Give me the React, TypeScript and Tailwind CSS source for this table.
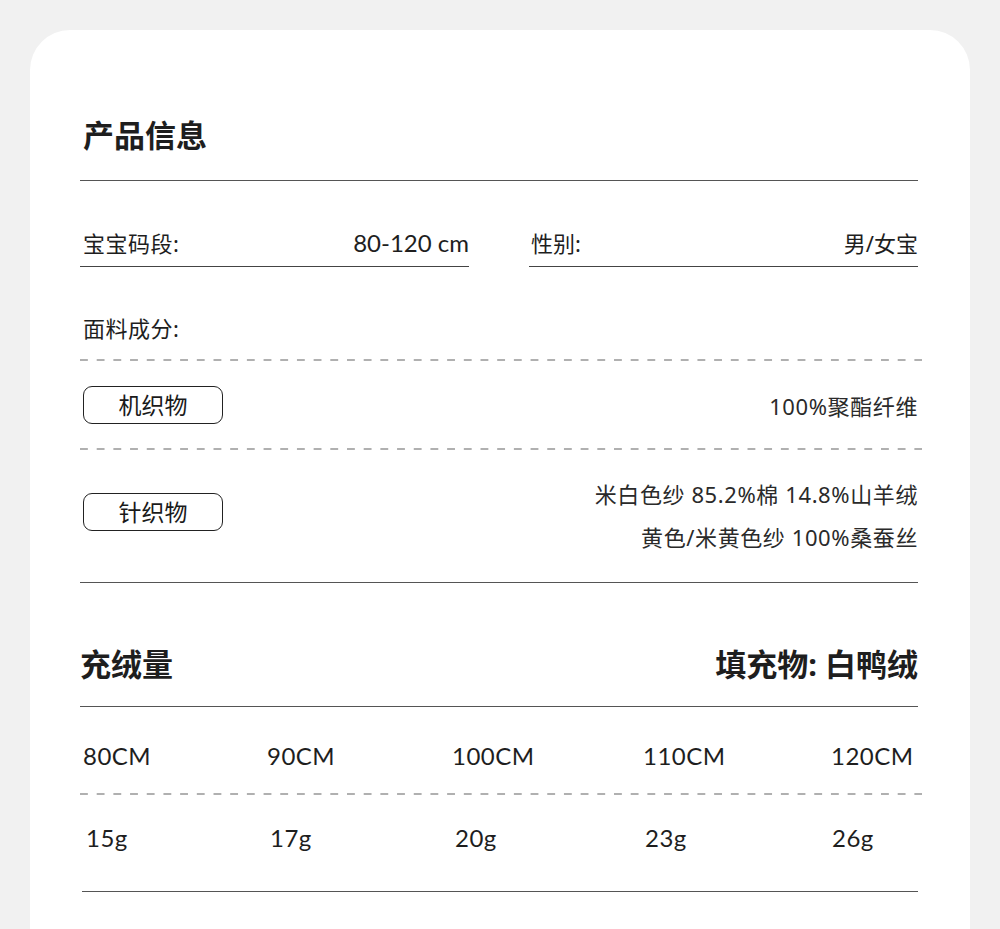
const cjk = "font-['Noto_Sans','Noto_Sans_CJK_SC',sans-serif]";
const geo = "font-['Lato','Noto_Sans_CJK_SC',sans-serif]";

function Dashed() {
  return (
    <div className="h-[2px] w-[842px] bg-[linear-gradient(to_right,#b0b0b0_8px,transparent_8px)] bg-[length:16.7px_2px] bg-repeat-x" />
  );
}

function Tag({ label }: { label: string }) {
  return (
    <div className="ml-[3px] flex h-[38px] w-[140px] items-center justify-center rounded-[9px] border border-[#222] text-[23px] leading-[24px] text-[#1a1a1a]">
      {label}
    </div>
  );
}

const sizes = ["80CM", "90CM", "100CM", "110CM", "120CM"];
const weights = ["15g", "17g", "20g", "23g", "26g"];

export default function App() {
  return (
    <div className={`min-h-[929px] bg-[#f1f1f1] pt-[30px] px-[30px] ${cjk} text-[#1e1e1e]`}>
      <div className="min-h-[899px] rounded-t-[40px] bg-white pl-[50px] pr-[52px]">
        {/* 产品信息 */}
        <div className="pt-[90px] pb-[30px] pl-[3px]">
          <h1 className="text-[31px] leading-[30px] font-bold">产品信息</h1>
        </div>
        <div className="h-px bg-[#555]" />

        <div className="flex justify-between">
          <div className="flex w-[389px] items-center justify-between border-b border-[#444] pt-[50px] pb-[11px] pl-[3px] text-[22px] leading-[24px]">
            <span className="tracking-[0.5px]">宝宝码段:</span>
            <span className={`${geo} text-[24px]`}>80-120 cm</span>
          </div>
          <div className="flex w-[389px] items-center justify-between border-b border-[#444] pt-[50px] pb-[11px] pl-[2px] text-[22px] leading-[24px]">
            <span>性别:</span>
            <span>男/女宝</span>
          </div>
        </div>

        <div className="pt-[49px] pb-[19px] pl-[3px] text-[22px] leading-[24px] tracking-[0.5px]">面料成分:</div>
        <Dashed />

        <div className="flex items-center justify-between pt-[25px] pb-[24px]">
          <Tag label="机织物" />
          <span className="pt-[2px] text-[22px] leading-[24px] tracking-[0.6px] text-[#2a2a2a]">100%聚酯纤维</span>
        </div>
        <Dashed />

        <div className="flex items-start justify-between">
          <div className="pt-[43px]">
            <Tag label="针织物" />
          </div>
          <div className="pt-[23px] pb-[23px] text-right text-[22px] leading-[43px] tracking-[0.6px] text-[#2a2a2a]">
            <div>米白色纱 85.2%棉 14.8%山羊绒</div>
            <div>黄色/米黄色纱 100%桑蚕丝</div>
          </div>
        </div>
        <div className="h-px bg-[#555]" />

        {/* 充绒量 */}
        <div className="flex items-center justify-between pt-[66px] pb-[27px] text-[31px] leading-[30px] font-bold">
          <span>充绒量</span>
          <span>填充物: 白鸭绒</span>
        </div>
        <div className="h-px bg-[#555]" />

        <div className={`grid grid-cols-[184px_185px_191px_188px_auto] pt-[37px] pb-[25px] pl-[3px] text-[24px] leading-[24px] tracking-[0.5px] ${geo}`}>
          {sizes.map((s) => (
            <span key={s}>{s}</span>
          ))}
        </div>
        <Dashed />

        <div className={`grid grid-cols-[184px_185px_190px_187px_auto] pt-[31px] pb-[41px] pl-[6px] text-[24px] leading-[24px] tracking-[0.5px] ${geo}`}>
          {weights.map((w) => (
            <span key={w}>{w}</span>
          ))}
        </div>
        <div className="ml-[2px] h-px bg-[#555]" />
      </div>
    </div>
  );
}
